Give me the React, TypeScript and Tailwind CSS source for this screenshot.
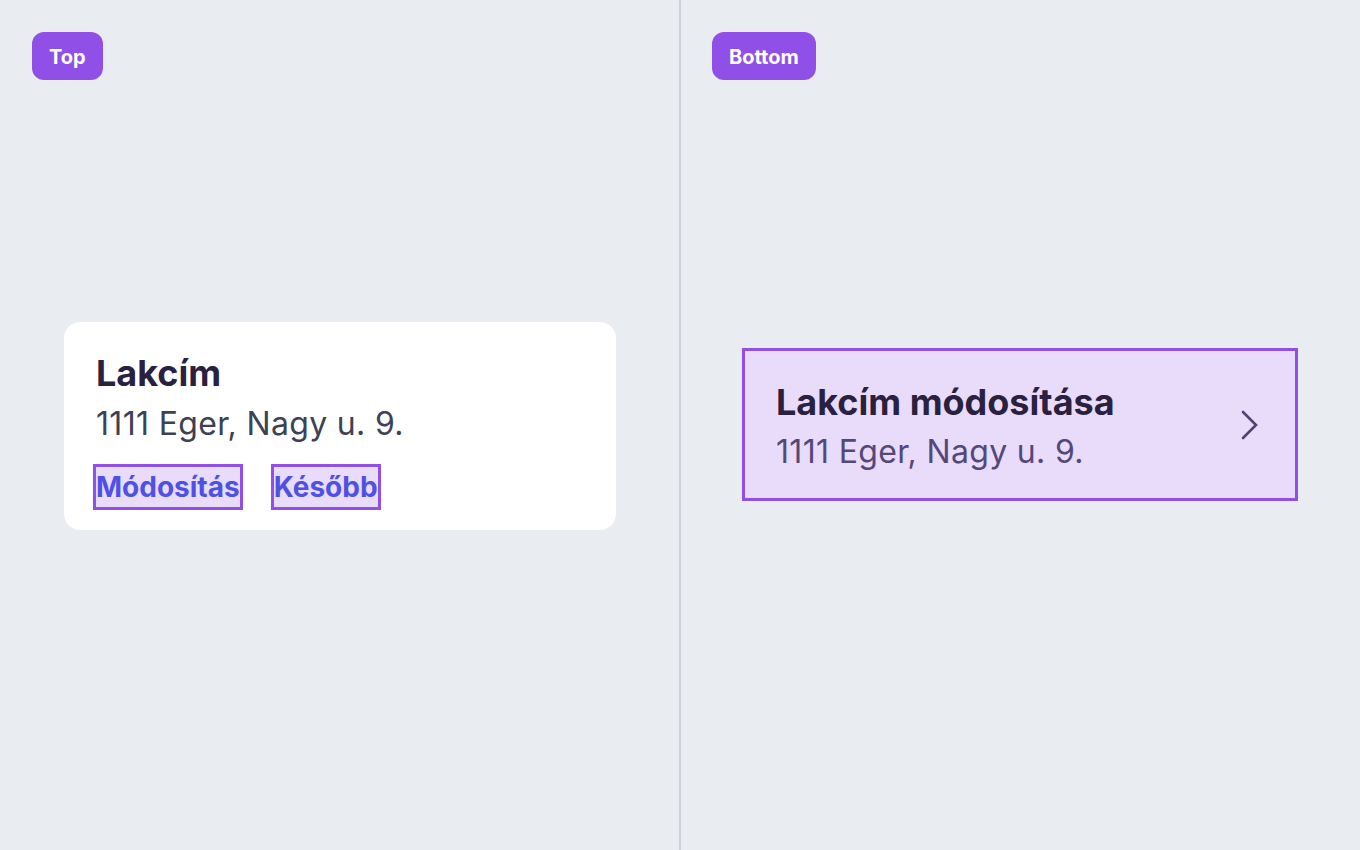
import React from "react";

export default function App() {
  return (
    <div className="relative flex h-[850px] w-[1360px] bg-[#e9ecf1]" style={{ fontFamily: "Inter, 'Noto Sans', sans-serif" }}>
      <div className="relative flex h-full w-[680px] items-center justify-center">
        <div className="absolute left-8 top-8 flex h-12 items-center rounded-xl bg-[#9050e8] px-[17px] pt-[2px] text-[20px] font-bold text-white">Top</div>
        <div className="mt-[2px] flex w-[552px] flex-col rounded-2xl bg-white px-8 pb-[23px] pt-[31px]">
          <div className="text-[36px] font-bold leading-[40px] text-[#2a2140]">Lakcím</div>
          <div className="mt-[11px] text-[32px] leading-[40px] tracking-[0.33px] text-[#3e4153]">1111 Eger, Nagy u. 9.</div>
          <div className="mt-[23px] flex gap-[34px]">
            <span className="bg-[#e9dcfa] text-[28px] font-bold leading-[40px] text-[#4f51e6] outline-[3px] outline-solid outline-[#9050e8]">Módosítás</span>
            <span className="bg-[#e9dcfa] text-[28px] font-bold leading-[40px] text-[#4f51e6] outline-[3px] outline-solid outline-[#9050e8]">Később</span>
          </div>
        </div>
      </div>
      <div className="absolute left-[679px] top-0 h-full w-[2px] bg-[#cfd2dc]" />
      <div className="relative flex h-full w-[680px] items-center justify-center">
        <div className="absolute left-8 top-8 flex h-12 items-center rounded-xl bg-[#9050e8] px-[17px] pt-[2px] text-[20px] font-bold text-white">Bottom</div>
        <div className="mt-[-1px] flex w-[556px] items-center justify-between border-[3px] border-[#9050e8] bg-[#e9dbfa] pb-[26px] pl-[31px] pr-[35px] pt-[31px]">
          <div className="flex flex-col">
            <div className="text-[36px] font-bold leading-[40px] text-[#2a2140]">Lakcím módosítása</div>
            <div className="mt-[10px] text-[32px] leading-[40px] tracking-[0.33px] text-[#54487a]">1111 Eger, Nagy u. 9.</div>
          </div>
          <svg width="20" height="30" viewBox="0 0 20 30" fill="none" className="mb-[4px]">
            <path d="M3 2 L16 15 L3 28" stroke="#4d4270" strokeWidth="2.6" strokeLinecap="round" strokeLinejoin="miter" />
          </svg>
        </div>
      </div>
    </div>
  );
}
